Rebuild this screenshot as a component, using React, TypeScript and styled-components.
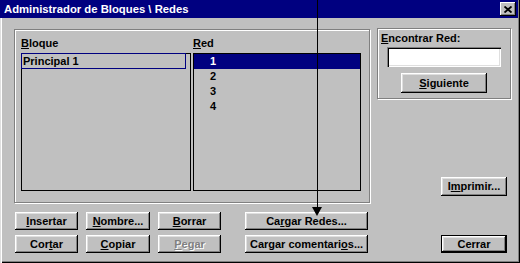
import React from "react";
import styled, { createGlobalStyle } from "styled-components";

const GlobalStyle = createGlobalStyle`
  html, body {
    margin: 0;
    padding: 0;
    background: #c0c0c0;
    overflow: hidden;
  }
  body {
    font-family: "Liberation Sans", Arial, sans-serif;
  }
`;

const bloques = ["Principal 1"];
const redes = ["1", "2", "3", "4"];

export default function App() {
  return (
    <>
      <GlobalStyle />
      <Window>
        <TitleBar>
          <Title>Administrador de Bloques \ Redes</Title>
          <CloseButton>
            <svg width="8" height="7" viewBox="0 0 8 7">
              <path d="M0.5 0.5 L7.5 6.5 M7.5 0.5 L0.5 6.5" stroke="#000" strokeWidth="1.8" />
            </svg>
          </CloseButton>
        </TitleBar>
        <Body>
          <TopSection>
            <GroupBox>
              <Lists>
                <ListColumn>
                  <Label>
                    <u>B</u>loque
                  </Label>
                  <ListBox $w={170}>
                    {bloques.map((b) => (
                      <FocusItem key={b}>{b}</FocusItem>
                    ))}
                  </ListBox>
                </ListColumn>
                <ListColumn>
                  <Label>
                    <u>R</u>ed
                  </Label>
                  <ListBox $w={168}>
                    {redes.map((r, i) => (
                      <Item key={r} $selected={i === 0}>
                        {r}
                      </Item>
                    ))}
                  </ListBox>
                </ListColumn>
              </Lists>
            </GroupBox>
            <RightColumn>
              <FindGroup>
                <Label>
                  <u>E</u>ncontrar Red:
                </Label>
                <TextInput />
                <Button $w={86} $h={20} $ml={20} $mt={6}>
                  <u>S</u>iguiente
                </Button>
              </FindGroup>
              <Button $w={66} $h={19} $ml={64} $mt={78}>
                I<u>m</u>primir...
              </Button>
            </RightColumn>
          </TopSection>
          <ButtonRow>
            <Button $w={63}>
              <u>I</u>nsertar
            </Button>
            <Button $w={64}>
              <u>N</u>ombre...
            </Button>
            <Button $w={63}>
              <u>B</u>orrar
            </Button>
            <Button $w={123} $ml={16}>
              Ca<u>r</u>gar Redes...
            </Button>
          </ButtonRow>
          <ButtonRow $mt={5}>
            <Button $w={63}>
              Cor<u>t</u>ar
            </Button>
            <Button $w={64}>
              <u>C</u>opiar
            </Button>
            <Button $w={63} disabled>
              <u>P</u>egar
            </Button>
            <Button $w={123} $ml={16}>
              Cargar comentari<u>o</u>s...
            </Button>
            <Button $w={66} $ml={65} $default>
              Cerrar
            </Button>
          </ButtonRow>
        </Body>
        <Annotation width="520" height="263" viewBox="0 0 520 263">
          <line x1="317.5" y1="0" x2="317.5" y2="208" stroke="#000" strokeWidth="1" />
          <polygon points="312,207 322,207 317,216" fill="#000" />
        </Annotation>
      </Window>
    </>
  );
}

const Window = styled.div`
  position: relative;
  width: 520px;
  height: 263px;
  box-sizing: border-box;
  background: #c0c0c0;
  box-shadow: inset 1px 0 #dfdfdf, inset 2px 0 #fff, inset -1px -1px #000,
    inset -2px -2px #808080;
  display: flex;
  flex-direction: column;
  font: bold 11px/13px "Liberation Sans", Arial, sans-serif;
  color: #000;
  overflow: hidden;
`;

const TitleBar = styled.div`
  display: flex;
  align-items: center;
  height: 18px;
  margin-right: 2px;
  padding-left: 4px;
  background: #000080;
`;

const Title = styled.div`
  flex-grow: 1;
  color: #fff;
  font-size: 11.3px;
  padding-top: 1px;
  white-space: nowrap;
`;

const CloseButton = styled.div`
  display: flex;
  align-items: center;
  justify-content: center;
  width: 16px;
  height: 14px;
  margin-right: 2px;
  box-sizing: border-box;
  background: #c0c0c0;
  box-shadow: inset -1px -1px #000, inset 1px 1px #fff, inset -2px -2px #808080;
`;

const Body = styled.div`
  display: flex;
  flex-direction: column;
  padding: 11px 0 0 14px;
`;

const TopSection = styled.div`
  display: flex;
  align-items: flex-start;
  gap: 7px;
`;

const GroupBox = styled.div`
  width: 356px;
  height: 174px;
  box-sizing: border-box;
  border: 1px solid #808080;
  box-shadow: inset 1px 1px #fff, 1px 1px #fff;
  padding: 7px 0 0 6px;
`;

const Lists = styled.div`
  display: flex;
  gap: 2px;
`;

const ListColumn = styled.div`
  display: flex;
  flex-direction: column;
`;

const Label = styled.div`
  height: 16px;
  white-space: nowrap;
`;

const ListBox = styled.div<{ $w: number }>`
  width: ${(p) => p.$w}px;
  height: 138px;
  box-sizing: border-box;
  border: 1px solid #000;
  background: #c0c0c0;
  display: flex;
  flex-direction: column;
`;

const FocusItem = styled.div`
  height: 16px;
  box-sizing: border-box;
  margin: -1px 4px 0 -1px;
  border: 1px solid #000080;
  padding-left: 1px;
  line-height: 14px;
  white-space: nowrap;
`;

const Item = styled.div<{ $selected?: boolean }>`
  height: 15px;
  line-height: 15px;
  padding-left: 16px;
  background: ${(p) => (p.$selected ? "#000080" : "transparent")};
  color: ${(p) => (p.$selected ? "#fff" : "#000")};
`;

const RightColumn = styled.div`
  display: flex;
  flex-direction: column;
  align-items: flex-start;
  width: 134px;
  margin-top: -1px;
`;

const FindGroup = styled.div`
  display: flex;
  flex-direction: column;
  align-items: flex-start;
  width: 134px;
  height: 71px;
  box-sizing: border-box;
  border: 1px solid #808080;
  box-shadow: inset 1px 1px #fff, 1px 1px #fff;
  padding: 3px 0 0 3px;

  & > ${Label} {
    height: 13px;
  }
`;

const TextInput = styled.div`
  width: 114px;
  height: 20px;
  margin: 2px 0 0 6px;
  box-sizing: border-box;
  background: #fff;
  box-shadow: inset 1px 1px #808080, inset 2px 2px #000, inset -1px -1px #fff,
    inset -2px -2px #dfdfdf;
`;

const ButtonRow = styled.div<{ $mt?: number }>`
  display: flex;
  gap: 8px;
  margin-top: ${(p) => p.$mt ?? 9}px;
  padding-left: 1px;
`;

const Button = styled.button<{
  $w: number;
  $h?: number;
  $ml?: number;
  $mt?: number;
  $default?: boolean;
}>`
  display: flex;
  align-items: center;
  justify-content: center;
  width: ${(p) => p.$w}px;
  height: ${(p) => p.$h ?? 18}px;
  margin-left: ${(p) => p.$ml ?? 0}px;
  margin-top: ${(p) => p.$mt ?? 0}px;
  padding: 0;
  box-sizing: border-box;
  font: inherit;
  color: #000;
  white-space: nowrap;
  background: #c0c0c0;
  border: ${(p) => (p.$default ? "1px solid #000" : "none")};
  box-shadow: inset -1px -1px #000, inset 1px 1px #fff, inset -2px -2px #808080,
    inset 2px 2px #dfdfdf;

  &:disabled {
    color: #808080;
    text-shadow: 1px 1px 0 #fff;
  }
`;

const Annotation = styled.svg`
  position: absolute;
  left: 0;
  top: 0;
  pointer-events: none;
`;
